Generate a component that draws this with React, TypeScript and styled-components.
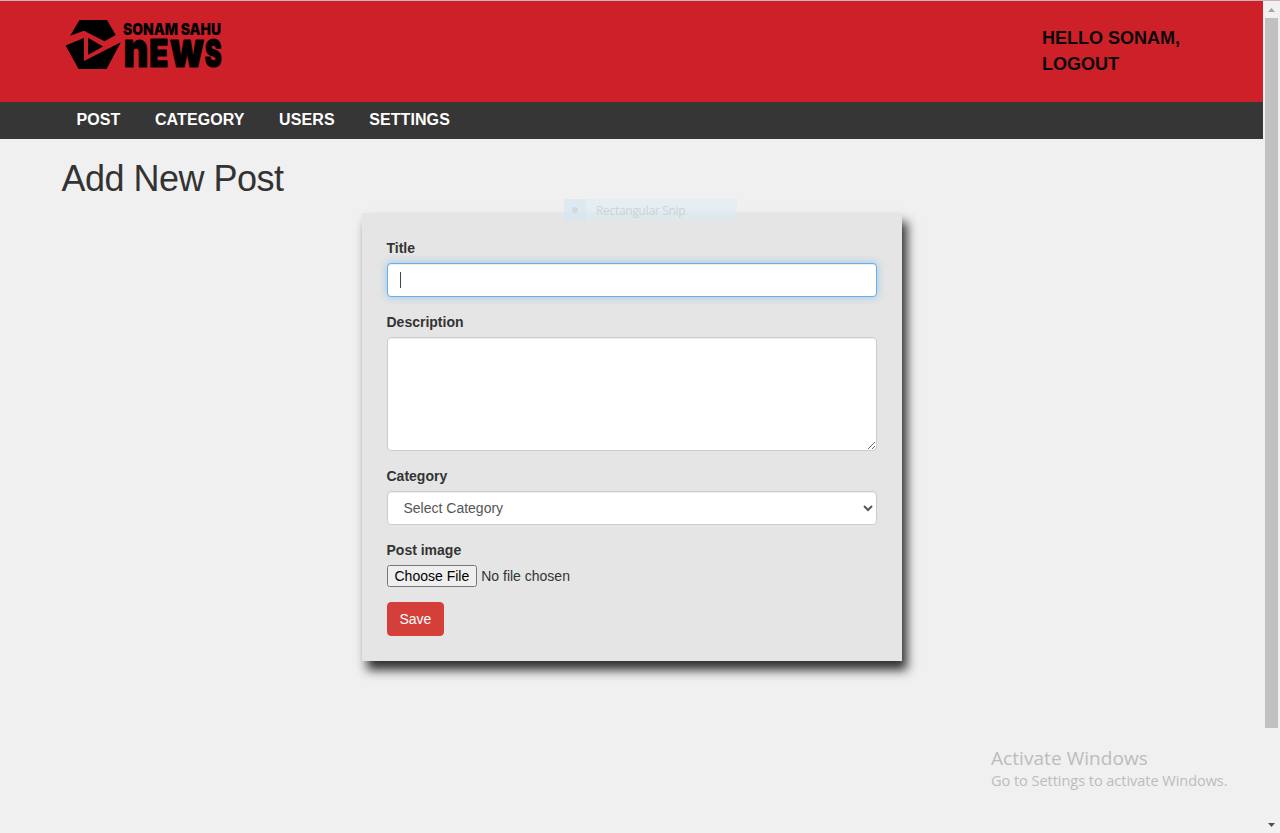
import React from "react";
import styled, { createGlobalStyle } from "styled-components";

const GlobalStyle = createGlobalStyle`
  *, *::before, *::after { box-sizing: border-box; }
  html, body { margin: 0; padding: 0; height: 833px; overflow: hidden; background: #f0f0f0; }
  body { font: 14px/20px "Liberation Sans", Arial, sans-serif; color: #333; }
  input, select, textarea, button { font-family: inherit; font-size: inherit; line-height: inherit; }
`;

const Screen = styled.div`
  position: relative;
  display: grid;
  grid-template-columns: 1263px 17px;
  width: 1280px;
  height: 833px;
  border-top: 1px solid #c9b3b8;
  overflow: hidden;
`;

const Page = styled.div`
  display: flex;
  flex-direction: column;
`;

const Header = styled.header`
  display: flex;
  justify-content: space-between;
  height: 101px;
  padding: 17px 81px 0 65px;
  background: #cd2028;
`;

const LogoSvg = styled.svg`
  display: block;
  flex: none;
  overflow: visible;
`;

const LowerForm = styled.tspan`
  text-transform: lowercase;
`;

const Account = styled.a`
  width: 140px;
  padding-top: 7px;
  color: #0a0a0a;
  font-size: 18px;
  font-weight: 700;
  line-height: 26px;
  text-transform: uppercase;
`;

const Nav = styled.nav`
  display: flex;
  height: 37px;
  padding: 0 61.5px;
  gap: 4.6px;
  background: #363636;
`;

const NavLink = styled.a`
  padding: 6px 15px 0;
  color: #fff;
  font-size: 16px;
  font-weight: 700;
  line-height: 23px;
  letter-spacing: 0.08px;
`;

const Heading = styled.h1`
  margin: 20px 0 14px;
  padding-left: 61.5px;
  font-size: 36px;
  font-weight: 400;
  line-height: 40px;
  letter-spacing: -0.5px;
`;

const Card = styled.form`
  width: 540px;
  height: 448px;
  margin-left: 361.5px;
  padding: 25px;
  background: #e5e5e5;
  box-shadow: 5px 9px 10px #303030;
`;

const Field = styled.div`
  position: relative;
  margin-bottom: 15px;
`;

const Label = styled.label`
  display: block;
  margin-bottom: 5px;
  font-weight: 700;
`;

const Control = styled.input<{ $active?: boolean }>`
  display: block;
  width: 100%;
  height: 34px;
  padding: 6px 12px;
  color: #555;
  background: #fff;
  border: 1px solid ${(p) => (p.$active ? "#66afe9" : "#ccc")};
  border-radius: 4px;
  outline: 0;
  box-shadow: inset 0 1px 1px rgba(0, 0, 0, 0.075)
    ${(p) => (p.$active ? ", 0 0 8px rgba(102, 175, 233, 0.6)" : "")};
`;

const TextArea = styled(Control)`
  height: 114px;
  resize: vertical;
`;

const Select = styled(Control)`
  padding-right: 11px;
`;

const Caret = styled.span`
  position: absolute;
  left: 13px;
  bottom: 9px;
  width: 1px;
  height: 16px;
  background: #444;
`;

const FileInput = styled.input`
  display: block;
  height: 22px;
`;

const SaveButton = styled.button`
  display: block;
  height: 34px;
  padding: 6px 12px;
  color: #fff;
  background: #d43f3a;
  border: 1px solid #d43f3a;
  border-radius: 4px;
`;

const Scrollbar = styled.div`
  display: flex;
  flex-direction: column;
  align-items: center;
  background: #f1f1f1;
`;

const ScrollArrow = styled.svg`
  display: block;
  flex: none;
`;

const Thumb = styled.div`
  width: 13px;
  height: 710px;
  margin-bottom: auto;
  background: #c1c1c1;
`;

const SnipItem = styled.div`
  position: absolute;
  left: 564px;
  top: 198px;
  display: flex;
  width: 173px;
  height: 22px;
  background: rgba(216, 234, 244, 0.45);
  color: rgba(185, 185, 188, 0.5);
  font: 12px/23px "Open Sans", sans-serif;
  letter-spacing: -0.3px;
`;

const SnipBullet = styled.span`
  display: grid;
  place-items: center;
  width: 22px;
  margin-right: 10px;
  background: rgba(205, 225, 245, 0.25);

  &::after {
    content: "";
    width: 6px;
    height: 6px;
    border-radius: 50%;
    background: rgba(208, 208, 210, 0.7);
  }
`;

const Watermark = styled.div`
  position: absolute;
  left: 991px;
  top: 744px;
  color: #bcbcbc;
  font-family: "Open Sans", sans-serif;
  white-space: nowrap;
`;

const WatermarkTitle = styled.div`
  font-size: 19px;
  line-height: 26px;
  letter-spacing: 0.06px;
`;

const WatermarkText = styled.div`
  font-size: 14.5px;
  line-height: 20px;
  letter-spacing: -0.03px;
`;

const Logo = () => (
  <LogoSvg width="160" height="56" viewBox="65 18 160 56" fontFamily="Inter, sans-serif" fontWeight="900">
    <path d="M79.5 20H107L115.7 35L104.5 41.2L84 30.8L70.2 35.8Z" />
    <path d="M65.6 45.4L84 38V61L120.8 42.2L106.6 69H78.6Z" />
    <path d="M88 37.8L103 46.6L88 55Z" />
    <text x="123" y="34.8" fontSize="15.5" textLength="98" lengthAdjust="spacingAndGlyphs">
      SONAM SAHU
    </text>
    <text y="67.2" fontSize="38" stroke="#000" strokeWidth="1.2" strokeLinejoin="round">
      <LowerForm x="123.6" fontSize="49" textLength="25" lengthAdjust="spacingAndGlyphs">N</LowerForm>
      <tspan x="149.2" textLength="19" lengthAdjust="spacingAndGlyphs">E</tspan>
      <LowerForm x="170.5" fontSize="49" textLength="33" lengthAdjust="spacingAndGlyphs">W</LowerForm>
      <tspan x="204.8" textLength="16.8" lengthAdjust="spacingAndGlyphs">S</tspan>
    </text>
  </LogoSvg>
);

export default function App() {
  return (
    <>
      <GlobalStyle />
      <Screen>
        <Page>
          <Header>
            <Logo />
            <Account>Hello Sonam, Logout</Account>
          </Header>
          <Nav>
            {["POST", "CATEGORY", "USERS", "SETTINGS"].map((item) => (
              <NavLink key={item}>{item}</NavLink>
            ))}
          </Nav>
          <Heading>Add New Post</Heading>
          <Card>
            <Field>
              <Label htmlFor="title">Title</Label>
              <Control id="title" $active />
              <Caret />
            </Field>
            <Field>
              <Label htmlFor="description">Description</Label>
              <TextArea as="textarea" id="description" />
            </Field>
            <Field>
              <Label htmlFor="category">Category</Label>
              <Select as="select" id="category">
                <option>Select Category</option>
              </Select>
            </Field>
            <Field>
              <Label htmlFor="image">Post image</Label>
              <FileInput type="file" id="image" />
            </Field>
            <SaveButton type="button">Save</SaveButton>
          </Card>
        </Page>
        <Scrollbar>
          <ScrollArrow width="17" height="17">
            <path d="M5 11L8.5 7L12 11Z" fill="#a3a3a3" />
          </ScrollArrow>
          <Thumb />
          <ScrollArrow width="17" height="17">
            <path d="M5 7L8.5 11L12 7Z" fill="#505050" />
          </ScrollArrow>
        </Scrollbar>
        <SnipItem>
          <SnipBullet />
          Rectangular Snip
        </SnipItem>
        <Watermark>
          <WatermarkTitle>Activate Windows</WatermarkTitle>
          <WatermarkText>Go to Settings to activate Windows.</WatermarkText>
        </Watermark>
      </Screen>
    </>
  );
}
